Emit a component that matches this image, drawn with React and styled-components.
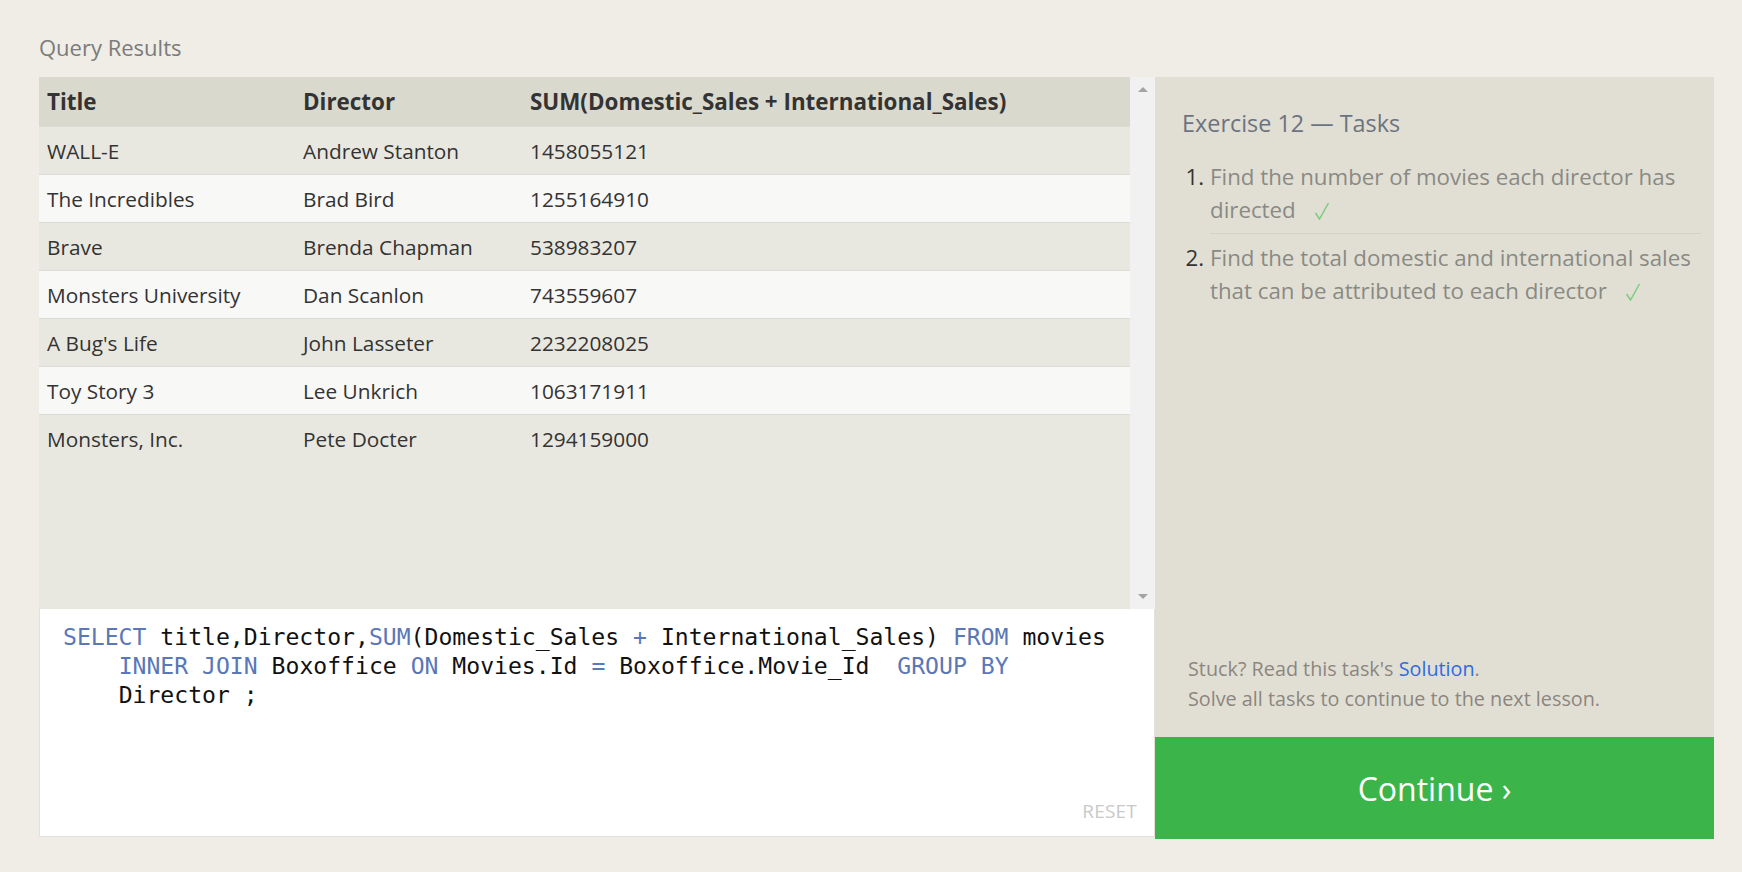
import React from 'react';
import styled, { createGlobalStyle } from 'styled-components';

const GlobalStyle = createGlobalStyle`
  body {
    margin: 0;
    background: #efede6;
    font-family: "Open Sans", "Noto Sans", sans-serif;
  }
`;

const Page = styled.div`
  padding: 32px 28px 0 39px;
  height: 872px;
  box-sizing: border-box;
`;

const Heading = styled.h2`
  margin: 0 0 15px;
  font-size: 22px;
  line-height: 30px;
  font-weight: 400;
  color: #7b7b7b;
`;

const Workspace = styled.div`
  display: grid;
  grid-template-columns: 1116px 1fr;
`;

const LeftColumn = styled.div`
  display: flex;
  flex-direction: column;
`;

const ResultsArea = styled.div`
  display: flex;
  height: 532px;
  background: #e9e8e0;
`;

const Table = styled.div`
  flex: 1;
`;

const Row = styled.div`
  display: grid;
  grid-template-columns: 256px 227px 1fr;
  align-items: center;
  box-sizing: border-box;
  height: ${p => (p.$header ? 50 : 48)}px;
  background: ${p => (p.$header ? '#dad9cd' : p.$even ? '#f8f8f7' : 'transparent')};
  border-bottom: ${p => (p.$last ? 'none' : '1px solid #dcdbd4')};
`;

const Cell = styled.div`
  padding: 0 8px;
  font-size: ${p => (p.$header ? 22.4 : 20.8)}px;
  color: #333;
  font-weight: ${p => (p.$header ? 700 : 400)};
  white-space: nowrap;
`;

const Scrollbar = styled.div`
  width: 25px;
  background: #f1f1f1;
  display: flex;
  flex-direction: column;
  justify-content: space-between;
  align-items: center;
  padding: 10px 0;
  box-sizing: border-box;
`;

const Arrow = styled.div`
  width: 0;
  height: 0;
  border-left: 5px solid transparent;
  border-right: 5px solid transparent;
  ${p => (p.$down ? 'border-top: 5px solid #a3a3a3;' : 'border-bottom: 5px solid #a3a3a3;')}
`;

const Editor = styled.div`
  height: 228px;
  box-sizing: border-box;
  background: #fff;
  border: 1px solid #e3e2da;
  border-top: none;
  display: flex;
  flex-direction: column;
  padding: 14px 17px 12px 23px;
`;

const Code = styled.pre`
  flex: 1;
  margin: 0;
  font-family: "DejaVu Sans Mono", "Liberation Mono", monospace;
  font-size: 23.1px;
  line-height: 29px;
  color: #111;
`;

const Kw = styled.span`
  color: #5a77b8;
`;

const EditorFooter = styled.div`
  display: flex;
  justify-content: flex-end;
`;

const ResetButton = styled.span`
  font-size: 19px;
  color: #c9c9c9;
  letter-spacing: 0.2px;
`;

const TaskPanel = styled.div`
  display: flex;
  flex-direction: column;
`;

const TaskBody = styled.div`
  height: 660px;
  box-sizing: border-box;
  background: #e1dfd4;
  padding: 31px 13px 23px 27px;
  display: flex;
  flex-direction: column;
`;

const TaskTitle = styled.h3`
  margin: 0 0 22px;
  font-size: 23.4px;
  line-height: 30px;
  font-weight: 400;
  color: #6c7380;
`;

const TaskList = styled.ol`
  margin: 0;
  padding-left: 28px;
  flex: 1;
`;

const TaskItem = styled.li`
  font-size: 22.3px;
  line-height: 33px;
  color: #8a8a84;
  padding: ${p => (p.$first ? '0 0 7px' : '7px 0 0')};
  border-bottom: ${p => (p.$first ? '1px solid #d3d1c6' : 'none')};
  &::marker {
    color: #333;
  }
`;

const Check = styled.svg`
  width: 16px;
  height: 18px;
  margin-left: 18px;
  vertical-align: -2px;
`;

const Note = styled.p`
  margin: 0 0 0 6px;
  font-size: 19.8px;
  line-height: 30px;
  color: #8c8680;
`;

const SolutionLink = styled.a`
  color: #2f6be0;
  text-decoration: none;
`;

const ContinueButton = styled.button`
  height: 102px;
  border: none;
  background: #3bb54a;
  color: #fff;
  font-family: inherit;
  font-size: 32px;
  padding-top: 2px;
  cursor: pointer;
`;

const rows = [
  ['WALL-E', 'Andrew Stanton', '1458055121'],
  ['The Incredibles', 'Brad Bird', '1255164910'],
  ['Brave', 'Brenda Chapman', '538983207'],
  ['Monsters University', 'Dan Scanlon', '743559607'],
  ["A Bug's Life", 'John Lasseter', '2232208025'],
  ['Toy Story 3', 'Lee Unkrich', '1063171911'],
  ['Monsters, Inc.', 'Pete Docter', '1294159000'],
];

const CheckMark = () => (
  <Check viewBox="0 0 16 18">
    <path d="M1.5 11 L5.5 17 L14.5 1" fill="none" stroke="#7ccb7f" strokeWidth="1.5" />
  </Check>
);

const App = () => {
  return (
    <>
      <GlobalStyle />
      <Page>
        <Heading>Query Results</Heading>
        <Workspace>
          <LeftColumn>
            <ResultsArea>
              <Table>
                <Row $header>
                  <Cell $header>Title</Cell>
                  <Cell $header>Director</Cell>
                  <Cell $header>SUM(Domestic_Sales + International_Sales)</Cell>
                </Row>
                {rows.map((r, i) => (
                  <Row key={r[0]} $even={i % 2 === 1} $last={i === rows.length - 1}>
                    <Cell>{r[0]}</Cell>
                    <Cell>{r[1]}</Cell>
                    <Cell>{r[2]}</Cell>
                  </Row>
                ))}
              </Table>
              <Scrollbar>
                <Arrow />
                <Arrow $down />
              </Scrollbar>
            </ResultsArea>
            <Editor>
              <Code>
                <Kw>SELECT</Kw> title,Director,<Kw>SUM</Kw>(Domestic_Sales <Kw>+</Kw> International_Sales) <Kw>FROM</Kw> movies{'\n'}
                {'    '}<Kw>INNER</Kw> <Kw>JOIN</Kw> Boxoffice <Kw>ON</Kw> Movies.Id <Kw>=</Kw> Boxoffice.Movie_Id  <Kw>GROUP</Kw> <Kw>BY</Kw>{'\n'}
                {'    '}Director ;
              </Code>
              <EditorFooter>
                <ResetButton>RESET</ResetButton>
              </EditorFooter>
            </Editor>
          </LeftColumn>
          <TaskPanel>
            <TaskBody>
              <TaskTitle>Exercise 12 — Tasks</TaskTitle>
              <TaskList>
                <TaskItem $first>
                  Find the number of movies each director has directed<CheckMark />
                </TaskItem>
                <TaskItem>
                  Find the total domestic and international sales that can be attributed to each director<CheckMark />
                </TaskItem>
              </TaskList>
              <Note>Stuck? Read this task's <SolutionLink href="#">Solution</SolutionLink>.</Note>
              <Note>Solve all tasks to continue to the next lesson.</Note>
            </TaskBody>
            <ContinueButton>Continue ›</ContinueButton>
          </TaskPanel>
        </Workspace>
      </Page>
    </>
  );
};

export default App;
